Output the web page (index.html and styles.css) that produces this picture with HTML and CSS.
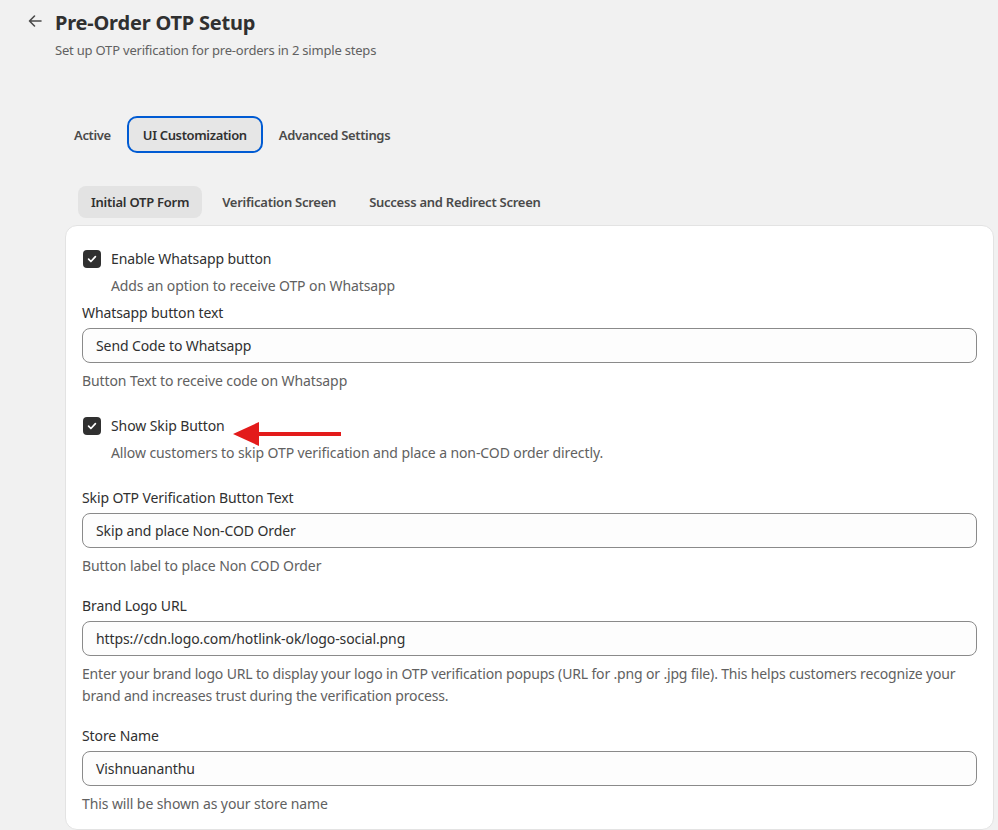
FILE: index.html
```html
<!DOCTYPE html>
<html lang="en">
<head>
<meta charset="utf-8">
<title>Pre-Order OTP Setup</title>
<link rel="stylesheet" href="styles.css">
</head>
<body>
<div class="page">
  <header class="header">
    <button class="back" aria-label="Back">
      <svg width="16" height="16" viewBox="0 0 16 16"><path d="M14 8H2.5M7.5 3L2.5 8l5 5" fill="none" stroke="#4a4a4a" stroke-width="1.6" stroke-linecap="round" stroke-linejoin="round"/></svg>
    </button>
    <div class="titles">
      <h1 class="title">Pre-Order OTP Setup</h1>
      <p class="subtitle">Set up OTP verification for pre-orders in 2 simple steps</p>
    </div>
  </header>

  <nav class="tabs">
    <button class="tab">Active</button>
    <button class="tab tab-selected">UI Customization</button>
    <button class="tab">Advanced Settings</button>
  </nav>

  <nav class="subtabs">
    <button class="subtab subtab-selected">Initial OTP Form</button>
    <button class="subtab">Verification Screen</button>
    <button class="subtab">Success and Redirect Screen</button>
  </nav>

  <section class="card">
    <div class="check-row">
      <span class="checkbox"><svg width="12" height="12" viewBox="0 0 12 12"><path d="M2.6 6.2l2.3 2.3 4.5-4.8" fill="none" stroke="#fff" stroke-width="1.7" stroke-linecap="round" stroke-linejoin="round"/></svg></span>
      <span class="check-label">Enable Whatsapp button</span>
    </div>
    <p class="check-help">Adds an option to receive OTP on Whatsapp</p>

    <div class="field field-tight">
      <label class="label">Whatsapp button text</label>
      <div class="input">Send Code to Whatsapp</div>
      <p class="help">Button Text to receive code on Whatsapp</p>
    </div>

    <div class="check-row check-row-spaced">
      <span class="checkbox"><svg width="12" height="12" viewBox="0 0 12 12"><path d="M2.6 6.2l2.3 2.3 4.5-4.8" fill="none" stroke="#fff" stroke-width="1.7" stroke-linecap="round" stroke-linejoin="round"/></svg></span>
      <span class="check-label">Show Skip Button</span>
    </div>
    <p class="check-help">Allow customers to skip OTP verification and place a non-COD order directly.</p>

    <div class="field field-after-check">
      <label class="label">Skip OTP Verification Button Text</label>
      <div class="input">Skip and place Non-COD Order</div>
      <p class="help">Button label to place Non COD Order</p>
    </div>

    <div class="field">
      <label class="label">Brand Logo URL</label>
      <div class="input">https://cdn.logo.com/hotlink-ok/logo-social.png</div>
      <p class="help help-wrap">Enter your brand logo URL to display your logo in OTP verification popups (URL for .png or .jpg file). This helps customers recognize your brand and increases trust during the verification process.</p>
    </div>

    <div class="field">
      <label class="label">Store Name</label>
      <div class="input">Vishnuananthu</div>
      <p class="help">This will be shown as your store name</p>
    </div>

    <svg class="annot-arrow" width="110" height="28" viewBox="0 0 110 28"><path d="M0 14L26 2V12H108V16H26V26Z" fill="#e31b1b"/></svg>
  </section>
</div>
</body>
</html>
```

FILE: styles.css
```css
* { box-sizing: border-box; }
html, body { margin: 0; padding: 0; }
body {
  background: #f1f1f1;
  font-family: "Noto Sans", "Open Sans", sans-serif;
  color: #303030;
  font-size: 14px;
  letter-spacing: -0.1px;
}
.page { padding: 9px 4px 0 0; }
button { font-family: inherit; border: 0; background: none; padding: 0; color: inherit; cursor: pointer; letter-spacing: inherit; }
.header { display: flex; align-items: flex-start; padding-left: 27px; }
.back { width: 18px; height: 24px; display: flex; align-items: center; margin-right: 10px; }
.title { margin: 0; font-size: 20px; line-height: 28px; font-weight: 700; color: #303030; letter-spacing: -0.2px; }
.subtitle { margin: 3px 0 0; font-size: 13px; line-height: 20px; color: #616161; letter-spacing: -0.2px; }

.tabs { display: flex; margin: 56px 0 0 58px; }
.tab {
  height: 37px; padding: 0 14px; border: 2px solid transparent; border-radius: 10px;
  font-size: 13px; font-weight: 600; color: #4a4a4a; letter-spacing: -0.35px;
}
.tab-selected { border-color: #005bd3; background: #e6e6e6; color: #303030; }

.subtabs { display: flex; gap: 7px; margin: 33px 0 0 78px; }
.subtab { height: 32px; padding: 0 13px; border-radius: 8px; font-size: 13px; font-weight: 600; color: #4a4a4a; letter-spacing: -0.25px; }
.subtab-selected { background: #e3e3e3; color: #303030; }

.card {
  position: relative;
  margin: 7px 0 0 65px;
  background: #fff;
  border: 1px solid #e3e3e3;
  border-radius: 12px;
  padding: 23px 16px 14px;
}
.check-row { display: flex; align-items: center; height: 20px; }
.check-row-spaced { margin-top: 24px; }
.checkbox {
  width: 18px; height: 18px; border-radius: 4px; background: #303030;
  display: flex; align-items: center; justify-content: center; margin: 0 10px 0 1px;
}
.check-label { font-size: 14px; line-height: 20px; color: #303030; }
.check-help { margin: 7px 0 0 29px; font-size: 14px; line-height: 20px; color: #616161; }

.field { margin-top: 19px; }
.field-tight { margin-top: 7px; }
.field-after-check { margin-top: 25px; }
.label { display: block; font-size: 14px; line-height: 20px; color: #303030; }
.input {
  margin-top: 5px; height: 35px; border: 1px solid #8a8a8a; border-radius: 8px; background: #fdfdfd;
  padding: 0 13px; display: flex; align-items: center; font-size: 14px; color: #303030;
}
.help { margin: 7px 0 0; font-size: 14px; line-height: 22px; color: #616161; }
.help-wrap { letter-spacing: -0.16px; }

.annot-arrow { position: absolute; left: 167px; top: 194px; }
```
